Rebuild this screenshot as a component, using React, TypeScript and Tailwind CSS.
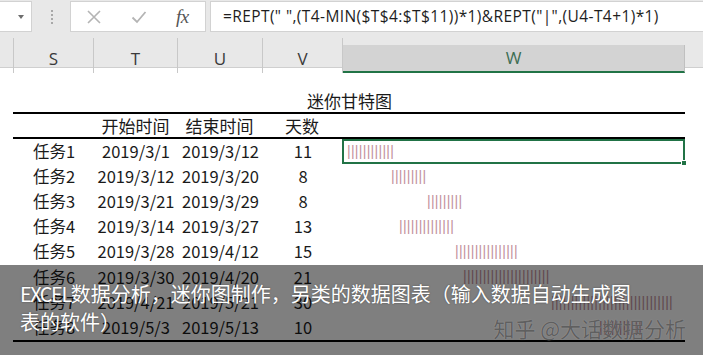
import React from "react";

const rows = [
  { name: "任务1", start: "2019/3/1", end: "2019/3/12", days: 11, off: 0, len: 12 },
  { name: "任务2", start: "2019/3/12", end: "2019/3/20", days: 8, off: 11, len: 9 },
  { name: "任务3", start: "2019/3/21", end: "2019/3/29", days: 8, off: 20, len: 9 },
  { name: "任务4", start: "2019/3/14", end: "2019/3/27", days: 13, off: 13, len: 14 },
  { name: "任务5", start: "2019/3/28", end: "2019/4/12", days: 15, off: 27, len: 16 },
  { name: "任务6", start: "2019/3/30", end: "2019/4/20", days: 21, off: 29, len: 22 },
  { name: "任务7", start: "2019/4/21", end: "2019/5/21", days: 30, off: 51, len: 31 },
  { name: "任务8", start: "2019/5/3", end: "2019/5/13", days: 10, off: 63, len: 11 },
];

const cols = "grid grid-cols-[14px_80px_84px_85px_80px_342px_18px]";

export default function App() {
  return (
    <div className="relative w-[703px] h-[355px] overflow-hidden bg-white font-['Noto_Sans_CJK_SC',sans-serif]">
      <FormulaBar />
      <ColumnHeaders />

      {/* sheet */}
      <div className="px-[13px]">
        <div className="h-[44px] flex items-end justify-center pr-[4px]">
          <span className="text-[17px] leading-[23px] text-[#1a1a1a]">迷你甘特图</span>
        </div>
        <div className="w-[672px] border-t-2 border-black" />
        <div className="w-[672px] h-[23px] flex items-center text-[17px] text-[#1a1a1a]">
          <span className="w-[80px]" />
          <span className="w-[84px] text-center pl-[1px]">开始时间</span>
          <span className="w-[85px] text-center">结束时间</span>
          <span className="w-[80px] text-center">天数</span>
        </div>
        <div className="w-[672px] border-t-2 border-black" />
      </div>

      <div className="flex flex-col">
        {rows.map((r, i) => (
          <div key={r.name} className={`${cols} h-[25.1px] items-center text-[16.5px] text-[#1a1a1a] leading-[25px]`}>
            <span />
            <span className="text-center">{r.name}</span>
            <span className="text-center">{r.start}</span>
            <span className="text-center">{r.end}</span>
            <span className="text-center">{r.days}</span>
            <span className="relative h-full pl-[4px] whitespace-pre font-['Liberation_Sans',sans-serif] text-[14px] tracking-[0.3px] text-[#c2909c]">
              <span style={{ marginLeft: r.off * 4 }}>{"|".repeat(r.len)}</span>
              {i === 0 && (
                <span className="absolute inset-0 -left-[1px] border-2 border-[#217346]">
                  <span className="absolute -right-[4px] -bottom-[4px] w-[6px] h-[6px] bg-[#217346] border border-white" />
                </span>
              )}
            </span>
            <span />
          </div>
        ))}
      </div>
      <div className="ml-[13px] w-[672px] border-t-2 border-black" />

      {/* caption overlay */}
      <div className="absolute left-0 right-0 bottom-0 h-[90px] bg-black/50">
        <p className="ml-[20px] w-[612px] pt-[15px] text-[20px] leading-[28px] text-white [text-shadow:0_0_2px_rgba(0,0,0,0.4)]">
          <span className="tracking-[-1.5px]">EXCEL</span>数据分析，迷你图制作，另类的数据图表（输入数据自动生成图表的软件）
        </p>
        <span className="absolute right-[17px] bottom-[13px] text-[21px] leading-[28px] text-[#5f5f5f] [text-shadow:0_0_1px_rgba(255,255,255,0.35)]">
          知乎 @大话数据分析
        </span>
      </div>
    </div>
  );
}

function FormulaBar() {
  return (
    <div className="h-[38px] bg-[#e8e8e8] flex items-start pt-[1px]">
      <div className="relative w-[32px] h-[31px] bg-white border border-[#d2d2d2] border-l-0">
        <span className="absolute left-[18px] top-[13px] w-0 h-0 border-x-[3.5px] border-x-transparent border-t-[4px] border-t-[#6d6d6d]" />
      </div>
      <div className="w-[38px] h-[31px] flex flex-col items-center justify-center gap-[2px] pl-[2px]">
        <span className="w-[2px] h-[2px] bg-[#a8a8a8]" />
        <span className="w-[2px] h-[2px] bg-[#a8a8a8]" />
        <span className="w-[2px] h-[2px] bg-[#a8a8a8]" />
        <span className="w-[2px] h-[2px] bg-[#a8a8a8]" />
      </div>
      <div className="w-[136px] h-[31px] bg-white border border-[#d2d2d2] flex items-center">
        <svg width="16" height="16" viewBox="0 0 16 16" className="ml-[15px]">
          <path d="M2 2 L14 14 M14 2 L2 14" stroke="#b4b4b4" strokeWidth="1.6" fill="none" />
        </svg>
        <svg width="16" height="16" viewBox="0 0 16 16" className="ml-[29px]">
          <path d="M1.5 8.5 L6 13 L14.5 3" stroke="#b4b4b4" strokeWidth="1.8" fill="none" />
        </svg>
        <span className="ml-[29px] font-['Liberation_Serif',serif] italic text-[19px] leading-none text-[#555] tracking-[-0.5px]">
          fx
        </span>
      </div>
      <div className="ml-[4px] flex-1 h-[31px] bg-white border border-[#d2d2d2] border-r-0 flex items-center pl-[12px]">
        <span className="font-['Open_Sans',sans-serif] text-[15.5px] tracking-[0.4px] text-[#1e1e1e] whitespace-pre">
          {'=REPT(" ",(T4-MIN($T$4:$T$11))*1)&REPT("|",(U4-T4+1)*1)'}
        </span>
      </div>
    </div>
  );
}

function ColumnHeaders() {
  const cell = "h-full flex items-center justify-center border-r border-[#c8c8c8] text-[17px] text-[#3a3a3a] pt-[6px]";
  return (
    <div className={`${cols} h-[30px] bg-[#e8e8e8] border-b border-[#cfcfcf] font-['Open_Sans',sans-serif]`}>
      <div className="h-full border-r border-[#c8c8c8]" />
      <div className={cell}>S</div>
      <div className={cell}>T</div>
      <div className={cell}>U</div>
      <div className={cell}>V</div>
      <div className="h-full pt-[7px] flex">
        <div className="flex-1 flex items-center justify-center bg-[#d3d3d3] border-b-2 border-[#217346] border-r border-r-[#c0c0c0] text-[17px] text-[#3d6e53]">
          W
        </div>
      </div>
      <div />
    </div>
  );
}
